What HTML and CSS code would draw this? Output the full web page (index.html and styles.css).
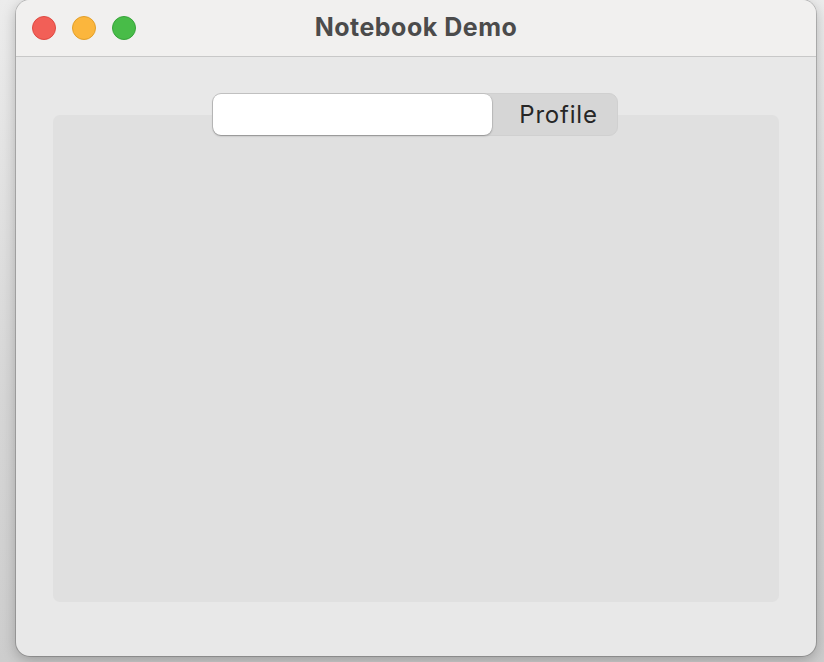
FILE: index.html
```html
<!DOCTYPE html>
<html>
<head>
<meta charset="utf-8">
<link rel="stylesheet" href="styles.css">
</head>
<body>
<div class="window">
  <div class="titlebar">
    <div class="lights">
      <span class="light red"></span>
      <span class="light yellow"></span>
      <span class="light green"></span>
    </div>
    <div class="title">Notebook Demo</div>
  </div>
  <div class="content">
    <div class="notebook">
      <div class="tabs">
        <div class="tab selected"></div>
        <div class="tab">Profile</div>
      </div>
      <div class="panel"></div>
    </div>
  </div>
</div>
</body>
</html>
```
FILE: styles.css
```css
html, body {
  margin: 0;
  padding: 0;
}
body {
  width: 824px;
  height: 662px;
  overflow: hidden;
  background: linear-gradient(to bottom, #ececec 0%, #d6d6d6 60%, #cdcdcd 100%);
  font-family: "Inter", "Liberation Sans", sans-serif;
}
.window {
  margin-left: 16px;
  width: 800px;
  height: 656px;
  border-radius: 14px;
  background: #e8e8e8;
  box-shadow: 0 0 0 1px rgba(0,0,0,0.18), 0 4px 14px rgba(0,0,0,0.25);
  overflow: hidden;
  display: flex;
  flex-direction: column;
}
.titlebar {
  height: 56px;
  background: #f1f0ef;
  border-bottom: 1px solid #c8c8c8;
  display: flex;
  align-items: center;
  position: relative;
  flex-shrink: 0;
}
.lights {
  display: flex;
  gap: 16px;
  padding-left: 16px;
}
.light {
  width: 24px;
  height: 24px;
  border-radius: 50%;
  box-sizing: border-box;
}
.red { background: #f25f57; border: 1px solid #de4a42; }
.yellow { background: #fbb63d; border: 1px solid #e29f2a; }
.green { background: #48bc48; border: 1px solid #37a43a; }
.title {
  position: absolute;
  left: 0;
  right: 0;
  top: 0;
  height: 54px;
  line-height: 54px;
  text-align: center;
  font-weight: 700;
  font-size: 25px;
  letter-spacing: 0.5px;
  color: #4b4b4b;
  pointer-events: none;
}
.content {
  flex: 1;
  padding: 36px 37px 54px 37px;
  display: flex;
}
.notebook {
  flex: 1;
  position: relative;
  display: flex;
  flex-direction: column;
}
.panel {
  flex: 1;
  margin-top: -21px;
  background: #e0e0e0;
  border-radius: 7px;
}
.tabs {
  align-self: flex-start;
  margin-left: 159px;
  width: 406px;
  height: 43px;
  box-sizing: border-box;
  border-radius: 9px;
  background: #d6d6d6;
  border: 1px solid #d0d0d0;
  display: flex;
  position: relative;
  z-index: 1;
}
.tab {
  display: flex;
  align-items: center;
  justify-content: center;
  font-size: 24px;
  letter-spacing: 0.8px;
  color: #262626;
}
.tab.selected {
  width: 279px;
  height: 41px;
  background: #ffffff;
  border-radius: 8px;
  box-shadow: 0 0 0 0.5px rgba(0,0,0,0.12), 0 1px 2px rgba(0,0,0,0.28);
}
.tab:last-child {
  flex: 1;
  padding-left: 8px;
}
```
